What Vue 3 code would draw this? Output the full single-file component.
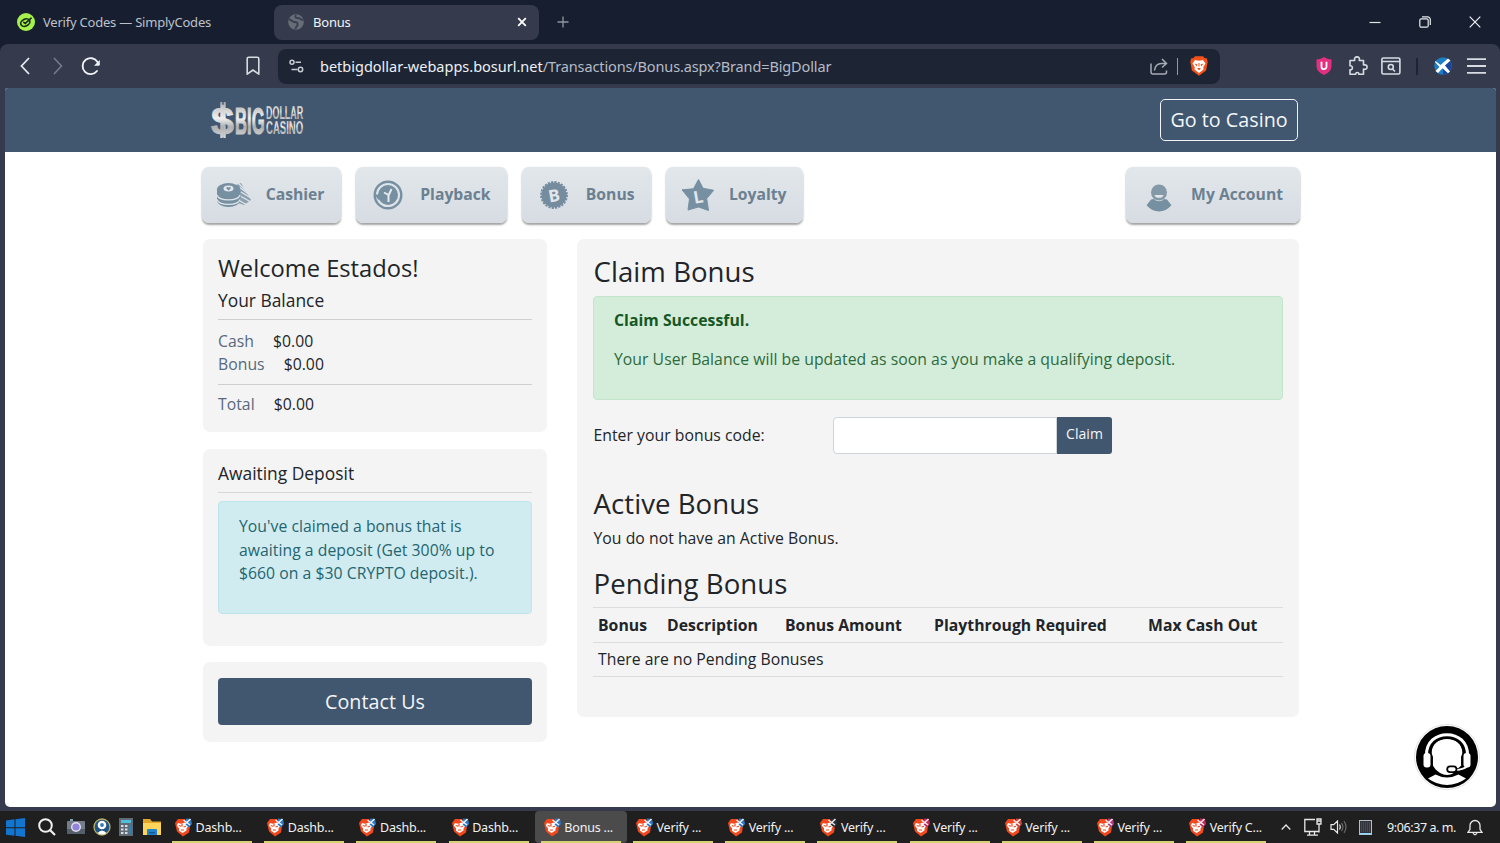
<script setup>
import { ref } from 'vue'

const code = ref('')

const menu = [
  { name: 'Cashier', icon: 'cashier' },
  { name: 'Playback', icon: 'playback' },
  { name: 'Bonus', icon: 'bonus' },
  { name: 'Loyalty', icon: 'loyalty' }
]

const tasks = [
  { title: 'Dashb...', badge: '#2f79c4' },
  { title: 'Dashb...', badge: '#2f79c4' },
  { title: 'Dashb...', badge: '#2f79c4' },
  { title: 'Dashb...', badge: '#2f79c4' },
  { title: 'Bonus ...', badge: '#2f79c4', active: true },
  { title: 'Verify ...', badge: '#2f79c4' },
  { title: 'Verify ...', badge: '#2f79c4' },
  { title: 'Verify ...', badge: '#2b3038' },
  { title: 'Verify ...', badge: '#c22a5c' },
  { title: 'Verify ...', badge: '#c9463a' },
  { title: 'Verify ...', badge: '#b23d7d' },
  { title: 'Verify C...', badge: '#c22a5c' }
]
</script>

<template>
  <div class="screen">
    <!-- tabs -->
    <div class="tabs">
      <div class="tab first">
        <svg width="18" height="18" viewBox="0 0 18 18">
          <circle cx="9" cy="9" r="9" fill="#a4f24b" />
          <g fill="none" stroke="#1b2a1c" stroke-width="1.7" stroke-linecap="round">
            <ellipse cx="8" cy="9.7" rx="4.8" ry="3.400" transform="rotate(-25 8 9)" />
            <path d="M6.800 9.300l1.500 1.200 5.800-5.300" />
          </g>
        </svg>
        <span>Verify Codes — SimplyCodes</span>
      </div>
      <div class="tab current">
        <svg width="16" height="16" viewBox="0 0 16 16">
          <circle cx="8" cy="8" r="7.8" fill="#686d76" />
          <path
            d="M1 5.500c2.500 0 3 2.500 5.500 2.500s3.500 1 3 3-2 1.500-2 4M8 1C6.500 3 8 4.500 10 4s3 2.500 5.500 2"
            fill="none"
            stroke="#3b4152"
            stroke-width="2"
          />
        </svg>
        <span>Bonus</span>
        <svg class="close" width="10" height="10" viewBox="0 0 10 10">
          <path d="M1.200 1.200l7.600 7.600M8.800 1.200L1.200 8.800" stroke="#fff" stroke-width="1.8" />
        </svg>
      </div>
      <svg class="plus" width="12" height="12" viewBox="0 0 12 12">
        <path d="M6 .5v11M.5 6h11" stroke="#8f95a1" stroke-width="1.3" />
      </svg>
      <div class="win">
        <svg width="12" height="12" viewBox="0 0 12 12"><path d="M.5 6.500h11" stroke="#e0e4ea" stroke-width="1.200" /></svg>
        <svg width="12" height="12" viewBox="0 0 12 12" fill="none" stroke="#e8ebf0" stroke-width="1.200">
          <rect x=".8" y="2.800" width="8.400" height="8.400" rx="1.500" />
          <path d="M3 .8h5.500a2.800 2.800 0 0 1 2.800 2.800V9" />
        </svg>
        <svg width="12" height="12" viewBox="0 0 12 12"><path d="M.7.7l10.600 10.600M11.300.7L.7 11.300" stroke="#f0f2f5" stroke-width="1.200" /></svg>
      </div>
    </div>

    <!-- toolbar -->
    <div class="toolbar-wrap">
      <div class="toolbar">
        <svg class="i-back" width="10" height="18" viewBox="0 0 10 18"><path d="M9 1L1.500 9 9 17" fill="none" stroke="#e6e9ee" stroke-width="1.800" /></svg>
        <svg class="i-fwd" width="10" height="18" viewBox="0 0 10 18"><path d="M1 1l7.500 8L1 17" fill="none" stroke="#747b8a" stroke-width="1.600" /></svg>
        <svg class="i-reload" width="20" height="20" viewBox="0 0 20 20">
          <path d="M16 15A8 8 0 1 1 16.500 6" fill="none" stroke="#f0f2f5" stroke-width="1.900" stroke-linecap="round" />
          <path d="M18.800 4v4.500q0 1.300-1.300 1.300H13z" fill="#f0f2f5" />
        </svg>
        <svg class="i-mark" width="14" height="20" viewBox="0 0 14 20"><path d="M1.200 2.800q0-1.600 1.600-1.600h8.400q1.600 0 1.600 1.600v15.400L7 14l-5.800 4.200z" fill="none" stroke="#d8dce2" stroke-width="1.600" stroke-linejoin="round" /></svg>
        <div class="address">
          <svg width="15" height="14" viewBox="0 0 15 14" fill="none" stroke="#c6cbd3" stroke-width="1.500">
            <circle cx="3" cy="3.200" r="2" /><path d="M6.500 3.200H12M2.500 10.500h6" /><circle cx="11.500" cy="10.500" r="2.200" />
          </svg>
          <span class="url">betbigdollar-webapps.bosurl.net<span>/Transactions/Bonus.aspx?Brand=BigDollar</span></span>
          <svg class="share" width="18" height="17" viewBox="0 0 18 17" fill="none" stroke="#a6abb5" stroke-width="1.500">
            <path d="M1 5.500V14q0 2 2 2h11.500q2 0 2-2v-1.500" />
            <path d="M4.500 12.500C5 8.500 7.500 5.500 11.500 5.500H16M12 1l4.500 4.500L12 9.500" />
          </svg>
          <i class="split"></i>
          <svg width="18" height="20" viewBox="0 0 18 20">
            <path d="M5 .3h8l1.600 1.800 2.300.4.8 3.500-1.600 8.500L9 19.800l-7.100-5.300L.3 6l.8-3.500 2.300-.4z" fill="#f4511b" />
            <path d="M5 4l4 .8 4-.8 2.500 3.400-2.200 3.700.2 2.400L9 17l-4.500-3.500.2-2.400L2.500 7.400z" fill="#fff" />
            <path d="M4.500 7.600l3 .8-.8 2zM13.500 7.600l-3 .8.800 2zM7 12.500l2-.8 2 .8-2 1.700zM8.500 7h1v3.500h-1z" fill="#f4511b" />
          </svg>
        </div>
        <div class="tools">
          <svg width="16" height="18" viewBox="0 0 16 18">
            <path d="M8 0q3 2.200 7.500 2.500V9q0 6-7.500 9Q.5 15 .5 9V2.500Q5 2.200 8 0z" fill="#e22f80" />
            <path d="M5.500 4.800v4.900a2.500 2.500 0 0 0 5 0V4.800" fill="none" stroke="#fff" stroke-width="1.800" />
          </svg>
          <svg width="20" height="20" viewBox="0 0 20 20">
            <path d="M2 4.500h4.700C6 1.700 7.300.9 9 .9s3 .9 2.300 3.600h4.200V9c2.700-.6 3.600.6 3.600 2s-1 2.700-3.600 2v5.200H10.800c.4-2.300-3.400-2.300-3 0H2v-4.400c3.200.5 3.200-4.500 0-4z" fill="none" stroke="#d8dce2" stroke-width="1.600" stroke-linejoin="round" />
          </svg>
          <svg width="20" height="18" viewBox="0 0 20 18" fill="none" stroke="#d8dce2" stroke-width="1.600">
            <rect x=".9" y="1" width="18" height="16" rx="1.500" /><path d="M1 4.500h18M11.500 12l2.500 2.500" /><circle cx="9.800" cy="10" r="2.500" />
          </svg>
          <i class="bar"></i>
          <svg width="18" height="18" viewBox="0 0 18 18">
            <circle cx="9" cy="9" r="8.700" fill="#1d7fc6" />
            <path d="M9 9l6.500-5.500A8.700 8.700 0 0 1 9 17.700z" fill="#1a479b" />
            <path d="M1.500 4l5 4L14 1.500 16.500 3.500l-5.500 5 5 6-2 1.800-5.500-5L4 16l-2.500-2L5.500 10 1 5z" fill="#fff" />
          </svg>
          <svg width="19" height="16" viewBox="0 0 19 16"><path d="M0 1.200h19M0 8h19M0 14.800h19" stroke="#d8dce2" stroke-width="1.800" /></svg>
        </div>
      </div>
    </div>

    <!-- web page -->
    <div class="page">
      <header class="header">
        <svg class="logo" width="94" height="44" viewBox="0 -3 94 44">
          <defs>
            <linearGradient id="silver" x1="0" y1="0" x2="0" y2="1">
              <stop offset="0" stop-color="#a8a8aa" />
              <stop offset=".45" stop-color="#f1f1f1" />
              <stop offset=".65" stop-color="#afb0b2" />
              <stop offset="1" stop-color="#dededf" />
            </linearGradient>
          </defs>
          <g font-family="'Liberation Sans', sans-serif" font-weight="bold" fill="url(#silver)">
            <path d="M9.300 1h2v36h-2zM12.700 1h2v36h-2z" />
            <text transform="translate(0 32.500) scale(1.060 1)" font-size="39" stroke="url(#silver)" stroke-width=".8">$</text>
            <text transform="translate(24 32.500) scale(.45 1)" font-size="37" stroke="url(#silver)" stroke-width="1.200">BIG</text>
            <text transform="translate(55 18) scale(.51 1)" font-size="17.500">DOLLAR</text>
            <text transform="translate(55 32.500) scale(.546 1)" font-size="17.500">CASINO</text>
          </g>
        </svg>
        <button class="casino">Go to Casino</button>
      </header>

      <div class="container">
        <nav class="menu">
          <a v-for="item in menu" :key="item.name" class="item" :class="item.icon">
            <svg v-if="item.icon === 'cashier'" width="36" height="28" viewBox="0 0 36 28">
              <path d="M20 4l5-2 10 17-7 5-6-2z" fill="#8da0af" />
              <path d="M22.500 2.500l7.500 7M24 6.500l9 7M25 11l10 6M25 15.500l9 5M24 20l7 4" stroke="#e0e5ea" stroke-width="1.300" />
              <path d="M1 8.500v10.500c0 4 5 7 11.500 7S24 23 24 19V8.500z" fill="#7690a2" />
              <path d="M1 14c2 6.500 21 6.500 23 0M1 18.500c2 6.500 21 6.500 23 0" fill="none" stroke="#e0e5ea" stroke-width="1.200" />
              <ellipse cx="12.500" cy="8.500" rx="11.500" ry="6.500" fill="#7690a2" />
              <ellipse cx="12.500" cy="7.500" rx="5" ry="2.900" fill="#e0e5ea" />
              <path d="M12.500 9.500L10 7l1.400-1 1.100.6 1.200-.6L15 7z" fill="#7690a2" />
            </svg>
            <svg v-if="item.icon === 'playback'" width="30" height="30" viewBox="0 0 30 30">
              <circle cx="15" cy="15" r="13.300" fill="none" stroke="#7690a2" stroke-width="2.400" />
              <circle cx="15" cy="15" r="10" fill="#7690a2" />
              <path d="M6 21.500A10.800 10.800 0 0 0 25 19" fill="none" stroke="#dfe4e9" stroke-width="1.600" />
              <path d="M1.500 14.500h8L5.500 20z" fill="#7690a2" />
              <path d="M11 12.500l4.500 2.500V22M15.500 15.500L18.500 9" fill="none" stroke="#e6eaee" stroke-width="2" />
            </svg>
            <svg v-if="item.icon === 'bonus'" width="28" height="28" viewBox="0 0 28 28">
              <circle cx="14" cy="14" r="12.500" fill="#758c9f" />
              <circle cx="14" cy="14" r="13" fill="none" stroke="#758c9f" stroke-width="1.800" stroke-dasharray="2.200 1.204" />
              <text x="14" y="20.500" font-family="'Open Sans', sans-serif" font-weight="700" font-size="17" text-anchor="middle" fill="#e2e6ea" transform="rotate(-10 14 14)">B</text>
            </svg>
            <svg v-if="item.icon === 'loyalty'" width="32" height="32" viewBox="0 0 32 32">
              <path d="M16.500.5l4.600 8.800 10.600 2-7 8.300 1.800 11.900-10-3.500-10.500 3 1.500-11L0 10.800l11.500-1z" fill="#7690a2" stroke="#7690a2" stroke-linejoin="round" />
              <text x="16" y="24" font-family="'Open Sans', sans-serif" font-weight="bold" font-size="17" text-anchor="middle" fill="#e2e6ea" transform="rotate(-10 16 17)">L</text>
            </svg>
            <span>{{ item.name }}</span>
          </a>
          <a class="item account">
            <svg width="26" height="28" viewBox="0 0 26 28">
              <path d="M5 15.500l3-.5c2.500 3 7.500 3 10 0l3 .5 4.500 5.800Q20 27.500 13 27.500T.5 21.300z" fill="#7690a2" />
              <circle cx="13" cy="8.500" r="8" fill="#8499a8" />
              <path d="M8.500 11h9c-.8 3.800-8.200 3.800-9 0z" fill="#e2e6ea" />
            </svg>
            <span>My Account</span>
          </a>
        </nav>

        <div class="columns">
          <aside class="left">
            <section class="card balance">
              <h3>Welcome Estados!</h3>
              <h5>Your Balance</h5>
              <div class="rows">
                <p><label>Cash</label>$0.00</p>
                <p><label>Bonus</label>$0.00</p>
              </div>
              <p class="total"><label>Total</label>$0.00</p>
            </section>
            <section class="card awaiting">
              <h5>Awaiting Deposit</h5>
              <div class="info">
                You've claimed a bonus that is<br />awaiting a deposit (Get 300% up to<br />$660 on a $30 CRYPTO deposit.).
              </div>
            </section>
            <section class="card contact">
              <button>Contact Us</button>
            </section>
          </aside>

          <main class="card right">
            <h2>Claim Bonus</h2>
            <div class="success">
              <b>Claim Successful.</b>
              <p>Your User Balance will be updated as soon as you make a qualifying deposit.</p>
            </div>
            <div class="form">
              <label>Enter your bonus code:</label>
              <input v-model="code" type="text" />
              <button>Claim</button>
            </div>
            <h2 class="active-title">Active Bonus</h2>
            <p class="none">You do not have an Active Bonus.</p>
            <h2 class="pending-title">Pending Bonus</h2>
            <div class="table">
              <div class="tr th">
                <span>Bonus</span><span>Description</span><span>Bonus Amount</span><span>Playthrough Required</span><span>Max Cash Out</span>
              </div>
              <div class="tr">There are no Pending Bonuses</div>
            </div>
          </main>
        </div>
      </div>

      <!-- chat button floating over the page -->
      <svg class="chat" width="66" height="66" viewBox="0 0 66 66">
        <circle cx="33" cy="33" r="32.500" fill="#fff" stroke="#e3e3e3" />
        <circle cx="33" cy="33" r="31" fill="#000" />
        <path d="M12.500 32C11 3.500 55 3.500 53.500 32" fill="none" stroke="#fff" stroke-width="3" />
        <path d="M17.500 29C18 9.500 48 9.500 48.500 29v11L40 49q-7 4-14 0-6-4-8-9.500z" fill="#fff" />
        <path d="M18 42V33l-1.500-4C16 9 50 9 49.500 29L48 33v8" fill="none" stroke="#000" stroke-width="1.900" />
        <rect x="9.500" y="29" width="7" height="14.500" rx="3" fill="#fff" />
        <rect x="49.500" y="29" width="7" height="14.500" rx="3" fill="#fff" />
        <path d="M51 43.500q-3 3-9 3.500l-2 3" fill="none" stroke="#000" stroke-width="5" />
        <path d="M53 42.500q-4 3-11 3.500" fill="none" stroke="#fff" stroke-width="2" />
        <rect x="33.200" y="42.300" width="9.300" height="5.800" rx="2.900" fill="#fff" stroke="#000" stroke-width="1.800" />
        <path d="M14 54.500l7.500-4q11.500 6 23 0l7.500 4Q43 61 33 61t-19-6.500z" fill="#fff" />
      </svg>
    </div>

    <!-- taskbar -->
    <div class="taskbar">
      <div class="pins">
        <svg width="19" height="19" viewBox="0 0 19 19"><path d="M0 2.500l8.500-1.200v7.900H0zM9.500 1.200L19 0v9.200H9.500zM0 10.200h8.500v7.600L0 16.700zM9.500 10.200H19V19l-9.500-1.200z" fill="#1275d0" /></svg>
        <svg width="18" height="18" viewBox="0 0 18 18"><circle cx="7.500" cy="7.500" r="6.300" fill="none" stroke="#f0f0f0" stroke-width="2" /><path d="M12 12l5 5" stroke="#f0f0f0" stroke-width="2.200" /></svg>
        <svg width="18" height="16" viewBox="0 0 18 16"><path d="M3 0h3v3H3z" fill="#79a7b8" /><rect y="2" width="18" height="13" rx="1" fill="#747d88" /><path d="M0 10h18v5H0z" fill="#555e6b" /><circle cx="9" cy="8" r="5" fill="#e4e1ef" /><circle cx="9" cy="8" r="3.600" fill="#9184da" /></svg>
        <svg width="18" height="18" viewBox="0 0 18 18"><circle cx="9" cy="9" r="8" fill="#205386" stroke="#b9b367" stroke-width="1.300" /><circle cx="9" cy="7" r="4.300" fill="#fff" /><circle cx="9" cy="7" r="1.900" fill="#347bb0" /><path d="M4.500 15q4.500-5 9 0-4.500 3-9 0z" fill="#fff" /></svg>
        <svg width="14" height="18" viewBox="0 0 14 18"><rect width="14" height="18" fill="#606b75" /><rect x="2" y="2" width="10" height="3" fill="#4fc0dc" /><path d="M2 8h2.500M6 8h2.500M2 11.500h2.500M6 11.500h2.500M2 15h2.500M6 15h2.500" stroke="#d8dde1" stroke-width="2" /><path d="M11 7v9" stroke="#2586bd" stroke-width="2" /></svg>
        <svg width="18" height="16" viewBox="0 0 18 16"><path d="M0 0h7l2 2.500h9V16H0z" fill="#e4a62a" /><path d="M0 4h18v12H0z" fill="#ffd45b" /><path d="M4 16v-5q0-1 1-1h8q1 0 1 1v5z" fill="#2184cf" /><path d="M6 13h6v1.500H6z" fill="#125b99" /></svg>
      </div>
      <div class="tasks">
        <div v-for="(task, i) in tasks" :key="i" class="task" :class="{ on: task.active }">
          <svg width="18" height="20" viewBox="0 0 18 20">
            <path d="M3 2h7l1 3 4 4-1 6.500L8 19.500l-6-5L0 6z" fill="#f3481d" />
            <path d="M3 6l3 .7 4-1.200 3.500 3-2 3v2L7.500 16 4 13.700v-2.500L1.800 8.500z" fill="#fff" />
            <path d="M3.700 8.500l2.500.8M8.500 10l2.500-.8M6 13h3M7 6.500v3" stroke="#f3481d" stroke-width="1.200" />
            <path d="M11 1.500l5 .5 1 5-3 3.500-4-3.500z" :fill="task.badge" />
            <path d="M8.500 3l6.500 5M15.500 2L9 8" stroke="#fff" stroke-width="1.500" opacity=".9" />
          </svg>
          <span>{{ task.title }}</span>
        </div>
      </div>
      <div class="tray">
        <svg class="up" width="10" height="6" viewBox="0 0 10 6"><path d="M.7 5.500L5 1l4.300 4.500" fill="none" stroke="#e5e5e5" stroke-width="1.300" /></svg>
        <svg class="net" width="18" height="18" viewBox="0 0 18 18" fill="none" stroke="#e8e8e8" stroke-width="1.300"><path d="M11 1.500H.8v12H15V8M5.500 14v3M10.500 14v3M3 17.200h11M13 1h4v5h-4zM15 6v8.500M13 3h4" /></svg>
        <svg class="vol" width="18" height="14" viewBox="0 0 18 14" fill="none" stroke="#e8e8e8" stroke-width="1.200"><path d="M1 4.700h2.700L7.500 1v12L3.700 9.300H1zM9.500 4.500q1.500 2.500 0 5" /><path d="M11.500 2.800q2.800 4.200 0 8.400M14 1.200q4 5.800 0 11.600" stroke="#686868" /></svg>
        <svg class="pad" width="13" height="15" viewBox="0 0 13 15"><rect x=".5" y=".5" width="12" height="14" fill="#30343a" stroke="#b5bdc5" /><path d="M2 3h9M2 5h9M2 7h9M2 9h9M2 11h9" stroke="#5c6269" stroke-dasharray="1 1" /><path d="M1 13.700h11" stroke="#8edbff" stroke-width="1.400" /></svg>
        <span class="clock">9:06:37 a. m.</span>
        <svg width="16" height="17" viewBox="0 0 16 17" fill="none" stroke="#e8e8e8" stroke-width="1.300"><path d="M1 13.300h14l-2-3V6.500a5 5 0 0 0-10 0v3.800zM6 14q2 3.500 4 0" /></svg>
      </div>
    </div>
  </div>
</template>

<style>
body {
  margin: 0;
  overflow: hidden;
}
</style>

<style scoped>
.screen {
  width: 1500px;
  height: 843px;
  display: flex;
  flex-direction: column;
  background: #353b4d;
  color: #212529;
  font-family: 'Open Sans', 'Noto Sans', sans-serif;
  font-size: 15.75px;
  letter-spacing: 0.03px;
  white-space: nowrap;
  overflow: hidden;
}
* {
  box-sizing: border-box;
}
svg {
  flex: none;
  display: block;
}
h2,
h3,
h5,
p {
  margin: 0;
  font-weight: 400;
}
button {
  font-family: inherit;
  letter-spacing: inherit;
  padding: 0;
}

/* browser */
.tabs {
  height: 44px;
  flex: none;
  display: flex;
  align-items: center;
  background: #171e2f;
  font-family: 'Noto Sans', sans-serif;
  font-size: 13px;
  letter-spacing: -0.22px;
}
.tab {
  display: flex;
  align-items: center;
}
.first {
  width: 257px;
  margin-left: 17px;
  gap: 8px;
  color: #bcc2cc;
}
.current {
  width: 265px;
  height: 35px;
  padding: 0 12px 0 14px;
  gap: 9px;
  border-radius: 8px;
  background: #353b4d;
  color: #f3f4f7;
}
.close {
  margin-left: auto;
}
.plus {
  margin-left: 18px;
}
.win {
  margin: 0 19px 0 auto;
  display: flex;
  gap: 38px;
}
.toolbar-wrap {
  flex: none;
  background: #171e2f;
}
.toolbar {
  height: 44px;
  display: flex;
  align-items: center;
  background: #353b4d;
  border-radius: 8px 8px 0 0;
}
.i-back {
  margin-left: 20px;
}
.i-fwd {
  margin-left: 23px;
}
.i-reload {
  margin-left: 18px;
}
.i-mark {
  margin-left: 145px;
}
.address {
  width: 942px;
  height: 35px;
  margin-left: 18px;
  padding: 0 12px 0 11px;
  display: flex;
  align-items: center;
  background: #1d2534;
  border-radius: 8px;
}
.url {
  margin-left: 16px;
  font-family: 'Noto Sans', sans-serif;
  font-size: 14.5px;
  color: #eef0f4;
  letter-spacing: 0;
}
.url span {
  color: #b5bbc6;
  letter-spacing: -0.13px;
}
.share {
  margin-left: auto;
}
.split {
  width: 1px;
  height: 17px;
  margin: 0 12px 0 9px;
  background: #9298a5;
}
.tools {
  margin-left: auto;
  margin-right: 14px;
  display: flex;
  align-items: center;
}
.tools svg:nth-child(2) {
  margin-left: 16px;
}
.tools svg:nth-child(3) {
  margin-left: 13px;
}
.bar {
  width: 2px;
  height: 17px;
  margin: 0 16px 0 15px;
  background: #1d2433;
}
.tools svg:last-child {
  margin-left: 15px;
}

/* page */
.page {
  position: relative;
  width: 1491px;
  height: 719px;
  flex: none;
  margin-left: 5px;
  background: #fff;
  border-radius: 3px 3px 5px 5px;
  overflow: hidden;
}
.header {
  height: 64px;
  padding: 0 198px 0 206px;
  display: flex;
  justify-content: space-between;
  align-items: center;
  background: #41576f;
}
.logo {
  overflow: visible;
}
.casino {
  width: 138px;
  height: 42px;
  padding-bottom: 2px;
  border: 1px solid #f1f3f5;
  border-radius: 5px;
  background: none;
  color: #f4f6f8;
  font-size: 19.7px;
}
.container {
  width: 1098px;
  margin-left: 197px;
}
.menu {
  display: flex;
  gap: 15px;
  padding-top: 15px;
}
.item {
  height: 56px;
  display: flex;
  align-items: center;
  justify-content: space-between;
  padding: 0 16px 0 14px;
  border-radius: 7px;
  background: linear-gradient(#e2e7eb, #d6dce2);
  box-shadow: 0 2px 2px #a4a4a4, 0 0 1px #c8cdd1;
  color: #6b8090;
  font-size: 15.7px;
  font-weight: 700;
  letter-spacing: 0;
}
.cashier {
  width: 138.500px;
}
.playback {
  width: 151px;
  padding-left: 17px;
}
.bonus {
  width: 129px;
  padding-left: 18px;
}
.loyalty {
  width: 137px;
  padding-left: 16px;
}
.item span {
  margin-top: -2px;
}
.account {
  width: 174px;
  padding-left: 20px;
  padding-right: 17px;
  margin-left: auto;
}
.account svg {
  margin-top: 5px;
}
.columns {
  display: flex;
  gap: 30px;
  margin: 16px 0 0 1px;
  align-items: flex-start;
}
.card {
  background: #f4f4f4;
  border-radius: 7px;
  padding: 15px;
}
.left {
  width: 344px;
  flex: none;
}
.balance {
  height: 193px;
}
h3 {
  font-size: 23.7px;
  line-height: 28px;
  letter-spacing: 0;
}
h5 {
  font-size: 17.4px;
  line-height: 26px;
  letter-spacing: 0;
}
.balance h5 {
  padding: 5px 0 6px;
  border-bottom: 1px solid #cfcfcf;
}
.rows {
  padding: 10px 0 8px;
  border-bottom: 1px solid #cfcfcf;
}
.balance p {
  height: 23px;
  line-height: 23px;
}
.balance label {
  color: #56697d;
  margin-right: 19px;
}
.balance .total {
  margin-top: 8px;
}
.awaiting {
  height: 197px;
  margin-top: 17px;
  padding-top: 11px;
}
.awaiting h5 {
  height: 33px;
  border-bottom: 1px solid #d8d8d8;
}
.info {
  height: 113px;
  margin-top: 8px;
  padding: 13px 20px;
  border: 1px solid #bee5eb;
  border-radius: 4px;
  background: #d1ecf1;
  color: #236570;
  line-height: 23.7px;
}
.contact {
  height: 80px;
  margin-top: 16px;
  padding-top: 16px;
}
.contact button {
  width: 100%;
  height: 47px;
  border: 0;
  border-radius: 4px;
  background: #41576f;
  color: #f4f6f8;
  font-size: 19.7px;
}
.right {
  width: 722px;
  flex: none;
  height: 478px;
  padding: 15px 16px 0;
}
h2 {
  margin-left: 0.6px;
  font-size: 27.6px;
  line-height: 34px;
}
.success {
  height: 104px;
  margin-top: 8px;
  padding: 11px 20px;
  border: 1px solid #c3e6cb;
  border-radius: 4px;
  background: #d4edda;
  color: #2c6a3c;
  line-height: 24px;
}
.success b {
  color: #155724;
}
.success p {
  margin-top: 15px;
}
.form {
  height: 37px;
  margin-top: 17px;
  display: flex;
  align-items: center;
}
.form label {
  width: 240px;
  padding: 0 0 1px 0.5px;
}
.form input {
  width: 224px;
  height: 37px;
  border: 1px solid #ced4da;
  border-radius: 4px 0 0 4px;
  background: #fff;
}
.form button {
  width: 55px;
  height: 37px;
  padding-bottom: 4px;
  border: 0;
  border-radius: 0 3px 3px 0;
  background: #41576f;
  color: #f4f6f8;
  font-size: 14px;
}
.active-title {
  margin-top: 32px;
}
.none {
  margin: 6px 0 0 0.5px;
  line-height: 24px;
}
.pending-title {
  margin-top: 16px;
}
.table {
  margin-top: 7px;
  border-top: 1px solid #dadcde;
}
.tr {
  height: 34px;
  padding-left: 5px;
  line-height: 33px;
  border-bottom: 1px solid #dadcde;
}
.th {
  height: 35px;
  display: grid;
  grid-template-columns: 69px 118px 149px 214px auto;
  line-height: 34px;
  font-weight: 700;
}
.chat {
  position: absolute;
  right: 16px;
  bottom: 17px;
}

/* taskbar */
.taskbar {
  height: 32px;
  margin-top: 4px;
  flex: none;
  display: flex;
  align-items: center;
  background: #1f1f1f;
  color: #f1f1f1;
  font-family: 'Noto Sans', sans-serif;
  font-size: 12.5px;
  letter-spacing: -0.2px;
}
.pins {
  width: 164px;
  padding-left: 6px;
  display: flex;
  align-items: center;
}
.pins svg:nth-child(2) {
  margin-left: 13px;
}
.pins svg:nth-child(3) {
  margin-left: 11px;
}
.pins svg:nth-child(4),
.pins svg:nth-child(5) {
  margin-left: 8px;
}
.pins svg:nth-child(6) {
  margin-left: 10px;
}
.tasks {
  display: flex;
  margin-left: 2px;
}
.task {
  width: 92.2px;
  height: 32px;
  display: flex;
  align-items: center;
  gap: 2.6px;
  padding-left: 9px;
  border-radius: 4px;
  background: linear-gradient(#d8d174, #d8d174) 6px 30px / 80px 2px no-repeat;
}
.on {
  background-color: #4b4b4b;
}
.tray {
  display: flex;
  align-items: center;
  margin-left: auto;
  margin-right: 17px;
}
.net {
  margin-left: 13px;
}
.vol {
  margin-left: 8px;
}
.pad {
  margin-left: 11px;
}
.clock {
  margin: 0 11px 0 15px;
  letter-spacing: -0.42px;
}
</style>
